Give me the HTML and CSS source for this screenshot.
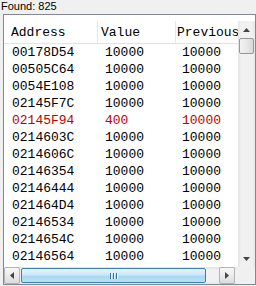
FILE: index.html
```html
<!DOCTYPE html>
<html>
<head>
<meta charset="utf-8">
<link rel="stylesheet" href="styles.css">
</head>
<body>
<div class="found">Found: 825</div>
<div class="list">
  <div class="view">
    <div class="head">
      <div class="th c1">Address</div>
      <div class="th c2">Value</div>
      <div class="th c3">Previous</div>
    </div>
    <div class="rows">
      <div class="row"><span class="c1">00178D54</span><span class="c2">10000</span><span class="c3">10000</span></div>
      <div class="row"><span class="c1">00505C64</span><span class="c2">10000</span><span class="c3">10000</span></div>
      <div class="row"><span class="c1">0054E108</span><span class="c2">10000</span><span class="c3">10000</span></div>
      <div class="row"><span class="c1">02145F7C</span><span class="c2">10000</span><span class="c3">10000</span></div>
      <div class="row changed"><span class="c1">02145F94</span><span class="c2">400</span><span class="c3">10000</span></div>
      <div class="row"><span class="c1">0214603C</span><span class="c2">10000</span><span class="c3">10000</span></div>
      <div class="row"><span class="c1">0214606C</span><span class="c2">10000</span><span class="c3">10000</span></div>
      <div class="row"><span class="c1">02146354</span><span class="c2">10000</span><span class="c3">10000</span></div>
      <div class="row"><span class="c1">02146444</span><span class="c2">10000</span><span class="c3">10000</span></div>
      <div class="row"><span class="c1">021464D4</span><span class="c2">10000</span><span class="c3">10000</span></div>
      <div class="row"><span class="c1">02146534</span><span class="c2">10000</span><span class="c3">10000</span></div>
      <div class="row"><span class="c1">0214654C</span><span class="c2">10000</span><span class="c3">10000</span></div>
      <div class="row"><span class="c1">02146564</span><span class="c2">10000</span><span class="c3">10000</span></div>
    </div>
  </div>
  <div class="vscroll">
    <div class="vbtn"><svg width="7" height="4" viewBox="0 0 7 4"><path d="M0 4 L3.5 0 L7 4 Z" fill="#444"/></svg></div>
    <div class="vtrack"><div class="vthumb"></div></div>
    <div class="vbtn"><svg width="7" height="4" viewBox="0 0 7 4"><path d="M0 0 L7 0 L3.5 4 Z" fill="#444"/></svg></div>
  </div>
  <div class="hscroll">
    <div class="hbtn"><svg width="4" height="7" viewBox="0 0 4 7"><path d="M4 0 L4 7 L0 3.5 Z" fill="#444"/></svg></div>
    <div class="htrack">
      <div class="hthumb"><span class="grip"></span><span class="grip"></span><span class="grip"></span></div>
    </div>
    <div class="hbtn hbtn-right"><svg width="4" height="7" viewBox="0 0 4 7"><path d="M0 0 L4 3.5 L0 7 Z" fill="#444"/></svg></div>
  </div>
  <div class="corner"></div>
</div>
</body>
</html>
```
FILE: styles.css
```css
html, body {
  margin: 0;
  padding: 0;
  background: #f0f0f0;
  width: 256px;
  height: 286px;
  overflow: hidden;
}

.found {
  font-family: "Liberation Sans", Arial, sans-serif;
  font-size: 11px;
  line-height: 12px;
  height: 12px;
  padding-left: 1px;
  color: #000;
}

.list {
  margin-top: 2px;
  margin-left: 3px;
  width: 253px;
  height: 271px;
  box-sizing: border-box;
  border: 1px solid #828790;
  padding-top: 6px;
  background: #fff;
  display: grid;
  grid-template-columns: 234px 17px;
  grid-template-rows: 246px 17px;
  overflow: hidden;
}

.view {
  overflow: hidden;
  font-family: "Liberation Mono", "Courier New", monospace;
  font-size: 13px;
  color: #000;
}

.head {
  display: flex;
  height: 23px;
  box-sizing: border-box;
  border-bottom: 1px solid #dfe3e8;
  background: #fff;
}

.th {
  flex-shrink: 0;
  box-sizing: border-box;
  padding-top: 3px;
  line-height: 17px;
  white-space: nowrap;
  overflow: hidden;
  border-right: 1px solid #e3e8ee;
}

.c1 { flex-shrink: 0; width: 94px; box-sizing: border-box; }
.c2 { flex-shrink: 0; width: 78px; box-sizing: border-box; }
.c3 { flex-shrink: 0; width: 80px; box-sizing: border-box; }

.th.c1 { padding-left: 7px; }
.th.c2 { padding-left: 3px; }
.th.c3 { padding-left: 1px; border-right: none; }

.row {
  display: flex;
  height: 17px;
  line-height: 17px;
  white-space: nowrap;
}

.row span { display: block; overflow: hidden; }
.row .c1 { padding-left: 8px; }
.row .c2 { padding-left: 7px; }
.row .c3 { padding-left: 6px; }

.row.changed { color: #c00000; }

.vscroll {
  display: flex;
  flex-direction: column;
  background: linear-gradient(to right, #e3e3e3, #f1f1f1 3px, #f1f1f1 14px, #e6e6e6);
}

.vbtn, .hbtn {
  flex: 0 0 17px;
  height: 17px;
  display: flex;
  align-items: center;
  justify-content: center;
}

.vtrack {
  flex: 1;
  padding: 0 1px;
}

.vthumb {
  box-sizing: border-box;
  height: 16px;
  border: 1px solid #979797;
  border-radius: 2px;
  background: linear-gradient(to right, #f3f3f3, #e8e8e8 50%, #d9d9d9);
}

.hscroll {
  display: flex;
  background: linear-gradient(#e3e3e3, #f1f1f1 3px, #f1f1f1 14px, #e6e6e6);
}

.hbtn {
  box-sizing: border-box;
  flex: 0 0 16px;
  width: 16px;
  border: 1px solid #b4b4b4;
  border-radius: 2px;
  background: linear-gradient(#f8f8f8, #ebebeb 50%, #dcdcdc);
}

.hbtn-right { margin-right: 3px; }

.htrack {
  flex: 1;
  padding: 1px 13px 1px 1px;
  display: flex;
}

.hthumb {
  flex: 1;
  box-sizing: border-box;
  border: 1px solid #3c7fb1;
  border-radius: 2px;
  background: linear-gradient(#e6f4fc, #cbe8f8 45%, #a9d8f2 55%, #b8e0f5);
  display: flex;
  justify-content: center;
  align-items: center;
  gap: 2px;
}

.grip {
  width: 1px;
  height: 6px;
  background: #3b6f93;
  box-shadow: 1px 0 0 #e8f5fc;
}

.corner {
  background: #f0f0f0;
}
```
